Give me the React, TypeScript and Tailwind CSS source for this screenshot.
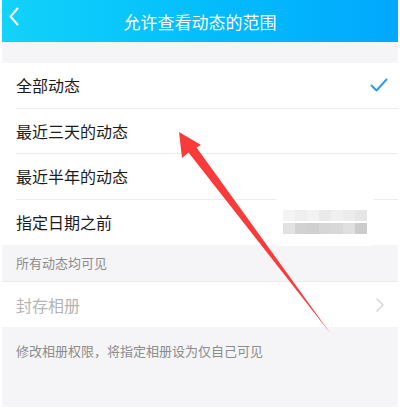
import React from "react";

const OPTIONS = [
  { label: "全部动态", checked: true },
  { label: "最近三天的动态", checked: false },
  { label: "最近半年的动态", checked: false },
  { label: "指定日期之前", checked: false },
];

// pixelated redaction blocks (top row lighter, bottom row darker)
const TOP_BLOCKS = ["#f4f4f4", "#eeeeee", "#f2f2f2", "#eaeaea", "#f0f0f0", "#ececec", "#e6e6e6"];
const BOTTOM_BLOCKS = ["#e2e2e2", "#d2d2d2", "#d0d0d0", "#d6d6d6", "#d8d8d8", "#e0e0e0", "#cccccc"];

export default function App() {
  return (
    <div
      className="relative w-[400px] h-[411px] bg-white overflow-hidden"
      style={{ fontFamily: '"Noto Sans CJK SC", "Noto Sans", sans-serif' }}
    >
      <div className="ml-[2px] w-[396px] h-[407px] bg-[#f5f5f7] flex flex-col">
        {/* Header */}
        <div className="relative h-[42px] shrink-0 bg-linear-to-r from-[#12d3fa] to-[#02a8fd] flex items-center justify-center">
          <svg className="absolute left-[6px] top-[7px]" width="12" height="19" viewBox="0 0 12 19" fill="none">
            <path d="M9.5 1.5L2.5 9.5L9.5 17.5" stroke="white" strokeWidth="2" strokeLinecap="round" strokeLinejoin="round" />
          </svg>
          <span className="text-[17px] leading-none text-white">允许查看动态的范围</span>
        </div>

        <div className="h-[21px] shrink-0" />

        {/* Options */}
        <div className="bg-white shrink-0">
          {OPTIONS.map((o, i) => (
            <div key={o.label} className="pl-[14px]">
              <div
                className={`h-[45.5px] flex items-center justify-between pr-[10px] ${
                  i < OPTIONS.length - 1 ? "border-b border-[#ececec]" : ""
                }`}
              >
                <span className="text-[16px] text-[#1c1c1c]">{o.label}</span>
                {o.checked && (
                  <svg width="18" height="15" viewBox="0 0 18 15" fill="none">
                    <path d="M1.5 7.5L6.5 12.5L16.5 1.5" stroke="#2d9de6" strokeWidth="2" strokeLinecap="round" strokeLinejoin="round" />
                  </svg>
                )}
              </div>
            </div>
          ))}
        </div>

        <div className="h-[37px] shrink-0 flex items-center pl-[14px] border-b border-[#ececec]">
          <span className="text-[13px] text-[#8c8c8c]">所有动态均可见</span>
        </div>

        <div className="h-[45px] shrink-0 bg-white flex items-center justify-between pl-[14px] pr-[14px]">
          <span className="text-[16px] text-[#b4b4b4]">封存相册</span>
          <svg width="8" height="14" viewBox="0 0 8 14" fill="none">
            <path d="M1 1L7 7L1 13" stroke="#d2d2d2" strokeWidth="1.3" strokeLinecap="round" strokeLinejoin="round" />
          </svg>
        </div>

        <div className="pt-[10px] pl-[14px]">
          <span className="text-[13px] leading-[18px] text-[#8c8c8c]">修改相册权限，将指定相册设为仅自己可见</span>
        </div>
      </div>

      {/* Redacted area */}
      <div className="absolute left-[276px] top-[197px] w-[98px] h-[49px] bg-white rounded-[4px] flex flex-col justify-center pl-[7px] gap-[2px]">
        <div className="flex">
          {TOP_BLOCKS.map((c, i) => (
            <div key={i} className="w-[12px] h-[11px]" style={{ backgroundColor: c }} />
          ))}
        </div>
        <div className="flex">
          {BOTTOM_BLOCKS.map((c, i) => (
            <div key={i} className="w-[12px] h-[11px]" style={{ backgroundColor: c }} />
          ))}
        </div>
      </div>

      {/* Red annotation arrow */}
      <svg className="absolute left-0 top-0 pointer-events-none" width="400" height="411" viewBox="0 0 400 411">
        <polygon points="179,132 201,145 196.5,147.5 330.5,333.5 188.5,152.5 182,158" fill="#fb3a3a" />
      </svg>
    </div>
  );
}
